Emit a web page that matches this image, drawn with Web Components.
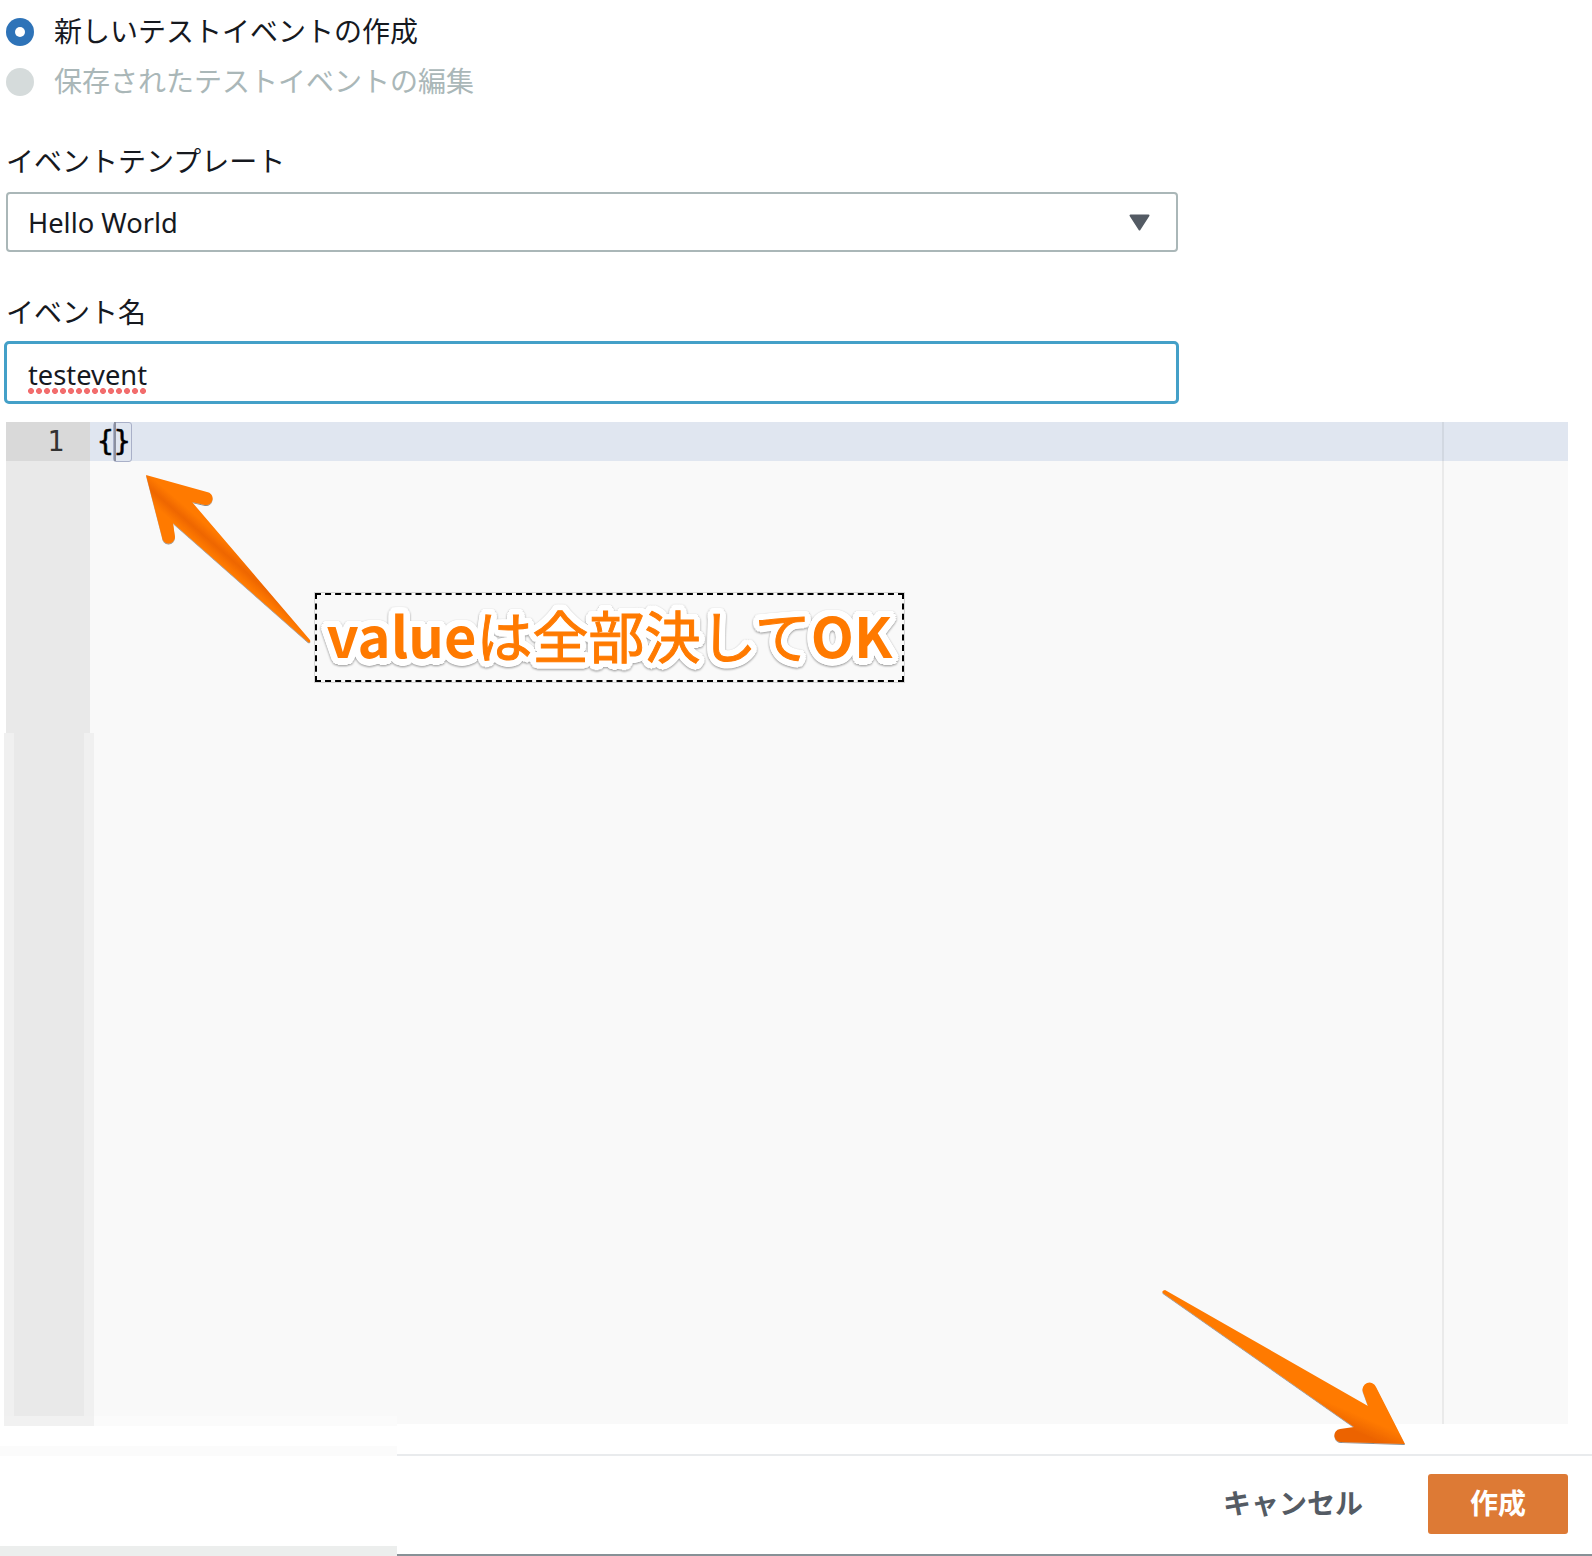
<!DOCTYPE html>
<html lang="ja">
<head>
<meta charset="utf-8">
<title>テストイベント</title>
<style>
  html, body { margin: 0; background: #fff; }
  body {
    width: 1592px;
    height: 1556px;
    overflow: hidden;
    font-family: "Noto Sans", "Noto Sans CJK JP", sans-serif;
    color: #16191f;
  }
</style>
</head>
<body>
<test-event-form>
  <form-radio checked>新しいテストイベントの作成</form-radio>
  <form-radio disabled>保存されたテストイベントの編集</form-radio>
  <form-field label="イベントテンプレート" style="--label-shift: -1px"><form-select>Hello World</form-select></form-field>
  <form-field label="イベント名" style="--label-shift: 2px; --label-gap: 11px"><form-input value="testevent"></form-input></form-field>
  <code-editor></code-editor>
  <form-footer></form-footer>
  <shot-annotations></shot-annotations>
</test-event-form>

<script>
const FONT = '"Noto Sans", "Noto Sans CJK JP", sans-serif';

class TestEventForm extends HTMLElement {
  constructor() {
    super();
    this.attachShadow({mode: 'open'}).innerHTML = `
      <style>
        :host { display: flex; flex-direction: column; position: relative; width: 1592px; height: 1556px; padding-top: 18px; box-sizing: border-box; }
        .radios { display: flex; flex-direction: column; gap: 22px; margin: 0 0 46px 6px; }
      </style>
      <div class="radios"><slot name="radios"></slot></div>
      <slot></slot>
    `;
  }
  connectedCallback() {
    this.querySelectorAll('form-radio').forEach(r => r.slot = 'radios');
  }
}

class FormRadio extends HTMLElement {
  constructor() {
    super();
    this.attachShadow({mode: 'open'}).innerHTML = `
      <style>
        :host { display: flex; align-items: center; gap: 20px; height: 28px; font: 28px/26px ${FONT}; color: #16191f; }
        :host([disabled]) { color: #aab7b8; }
        .dot { width: 28px; height: 28px; border-radius: 50%; background: #d5dbdb; display: flex; align-items: center; justify-content: center; flex: none; }
        :host([checked]) .dot { background: #2e73b8; }
        :host([checked]) .dot::after { content: ""; width: 10px; height: 10px; border-radius: 50%; background: #fff; }
        .text { padding-bottom: 2px; }
      </style>
      <span class="dot"></span><span class="text"><slot></slot></span>
    `;
  }
}

class FormField extends HTMLElement {
  constructor() {
    super();
    this.attachShadow({mode: 'open'}).innerHTML = `
      <style>
        :host { display: block; margin: 0 0 38px 6px; }
        :host(:last-of-type) { margin-bottom: 0; }
        label { display: block; height: 40px; margin-bottom: var(--label-gap, 10px); font: 28px/40px ${FONT}; color: #16191f; transform: translateY(var(--label-shift, 0)); }
      </style>
      <label></label>
      <slot></slot>
    `;
  }
  connectedCallback() {
    this.shadowRoot.querySelector('label').textContent = this.getAttribute('label');
  }
}

class FormSelect extends HTMLElement {
  constructor() {
    super();
    this.attachShadow({mode: 'open'}).innerHTML = `
      <style>
        :host { display: flex; align-items: center; justify-content: space-between; width: 1172px; height: 60px; box-sizing: border-box;
          border: 2px solid #aab7b8; border-radius: 4px; padding: 1px 26px 0 20px; font: 27.3px/1 ${FONT}; color: #16191f; }
        svg { display: block; }
      </style>
      <span><slot></slot></span>
      <svg width="21" height="17" viewBox="0 0 21 17"><path d="M1.5 1.5H19.5L10.5 15.5Z" fill="#545b64" stroke="#545b64" stroke-width="2" stroke-linejoin="round"/></svg>
    `;
  }
}

class FormInput extends HTMLElement {
  constructor() {
    super();
    this.attachShadow({mode: 'open'}).innerHTML = `
      <style>
        :host { display: flex; align-items: center; width: 1175px; height: 63px; margin-left: -2px; box-sizing: border-box;
          border: 3px solid #44a0c8; border-radius: 5px; padding: 5px 0 0 21px; font: 27.3px/1 ${FONT}; color: #16191f; }
        .word { position: relative; display: inline-block; }
        .word::after { content: ""; position: absolute; left: 0; right: 0; bottom: -5px; height: 6px;
          background: radial-gradient(circle at 3px 3px, #f26d6d 2.7px, transparent 3.2px) 0 0 / 8px 6px repeat-x; }
      </style>
      <span class="word"></span>
    `;
  }
  connectedCallback() {
    this.shadowRoot.querySelector('.word').textContent = this.getAttribute('value');
  }
}

class CodeEditor extends HTMLElement {
  constructor() {
    super();
    this.attachShadow({mode: 'open'}).innerHTML = `
      <style>
        :host { display: grid; grid-template-columns: 84px 1fr; position: relative; width: 1562px; height: 1002px; margin: 18px 0 0 6px;
          background: #f9f9f9; font: 28px/39px "DejaVu Sans Mono", "Liberation Mono", monospace; color: #000; }
        .gutter { background: #e9e9e9; color: #333; }
        .gutter div { height: 39px; padding-right: 26px; text-align: right; background: #d9d9d9; }
        .code div { height: 39px; padding-left: 7px; background: #e0e6f0; -webkit-text-stroke: .5px #000; }
        .bracket { position: absolute; left: 107px; top: 0; width: 17px; height: 38px; border: 1px solid #a9b0c8; border-radius: 3px; }
        .cursor { position: absolute; left: 108px; top: 0; width: 2px; height: 39px; background: #8b90a0; }
        .margin { position: absolute; left: 1436px; top: 0; bottom: 0; width: 2px; background: rgba(0, 0, 0, .06); }
      </style>
      <div class="gutter"><div>1</div></div>
      <div class="code"><div>{}</div></div>
      <span class="bracket"></span><span class="cursor"></span><span class="margin"></span>
    `;
  }
}

class FormFooter extends HTMLElement {
  constructor() {
    super();
    this.attachShadow({mode: 'open'}).innerHTML = `
      <style>
        :host { display: flex; justify-content: flex-end; align-items: flex-start; gap: 65px; margin-top: 30px; height: 102px; box-sizing: border-box;
          border-top: 2px solid #e9ebed; border-bottom: 2px solid #879196; padding: 18px 24px 0 0; font: 700 28px/58px ${FONT}; }
        .cancel { color: #545b64; }
        .create { width: 140px; height: 60px; border-radius: 3px; background: #dd7a35; color: #fff; text-align: center; }
      </style>
      <span class="cancel">キャンセル</span>
      <span class="create">作成</span>
    `;
  }
}

// white halo for the note text, built as a ring of shadows so the fill can keep its own stroke
const halo = (() => {
  const parts = [];
  for (let i = 0; i < 24; i++) {
    const a = i / 24 * Math.PI * 2;
    parts.push(`${(Math.cos(a) * 6.5).toFixed(1)}px ${(Math.sin(a) * 6.5).toFixed(1)}px 0 #fff`);
  }
  return parts.join(',');
})();

// everything pasted on top of the screenshot: arrows, note and the masked strips
class ShotAnnotations extends HTMLElement {
  constructor() {
    super();
    this.attachShadow({mode: 'open'}).innerHTML = `
      <style>
        :host { position: absolute; inset: 0; display: block; pointer-events: none; }
        .patch { position: absolute; }
        svg { position: absolute; left: 0; top: 0; }
        .note { position: absolute; left: 315px; top: 593px; width: 589px; height: 89px; box-sizing: border-box;
          border: 2px dashed #000; outline: 1px solid rgba(190, 190, 190, .6);
          display: flex; align-items: center; justify-content: center; white-space: nowrap; padding-bottom: 7px;
          font: 400 56px/1 "Noto Sans CJK JP", sans-serif; color: #ff7a00; }
        .text { filter: drop-shadow(0 1px 1px rgba(0, 0, 0, .4)); text-shadow: ${halo}; }
        .text .l { font-weight: 700; }
        .text .k { -webkit-text-stroke: 1px #ff7a00; }
      </style>
      <div class="patch" style="left:4px;top:733px;width:90px;height:693px;background:#f0f0f0"></div>
      <div class="patch" style="left:14px;top:733px;width:70px;height:683px;background:#e9e9e9"></div>
      <div class="patch" style="left:94px;top:1416px;width:303px;height:10px;background:#fbfbfb"></div>
      <div class="patch" style="left:0;top:1426px;width:397px;height:130px;background:#fff"></div>
      <div class="patch" style="left:4px;top:1416px;width:90px;height:10px;background:#f1f1f1"></div>
      <div class="patch" style="left:0;top:1446px;width:397px;height:10px;background:#fbfbfb"></div>
      <div class="patch" style="left:0;top:1546px;width:397px;height:10px;background:#eceeed"></div>
      <svg width="1592" height="1556" viewBox="0 0 1592 1556">
        <defs>
          <linearGradient id="a1" gradientUnits="userSpaceOnUse" x1="165" y1="515" x2="178" y2="500">
            <stop offset="0" stop-color="#ff7a00"/><stop offset=".5" stop-color="#ee6600"/><stop offset="1" stop-color="#ff7a00"/>
          </linearGradient>
          <linearGradient id="a2" gradientUnits="userSpaceOnUse" x1="1372" y1="1400" x2="1358" y2="1432">
            <stop offset="0" stop-color="#ff7a00"/><stop offset=".55" stop-color="#ff7a00"/><stop offset="1" stop-color="#ec6400"/>
          </linearGradient>
          <filter id="sh" x="-5%" y="-5%" width="110%" height="110%"><feDropShadow dx="0" dy="1" stdDeviation=".5" flood-color="#000" flood-opacity=".45"/></filter>
        </defs>
        <path filter="url(#sh)" fill="url(#a1)" d="M146 475 L207 492 A6.5 6.5 0 0 1 205 505 L192 502 L310 640 Q311 643 308 642 L173 523 L175 537 A6.5 6.5 0 0 1 162 537 Z"/>
        <path filter="url(#sh)" fill="url(#a2)" d="M1163 1293 Q1161 1291 1165 1290 L1368 1406 L1363 1392 A6.5 6.5 0 0 1 1376 1387 L1405 1444 L1342 1442 A6.5 6.5 0 0 1 1340 1429 L1354 1427 Z"/>
      </svg>
      <div class="note"><span class="text"><span class="l">value</span><span class="k">は全部決して</span><span class="l">OK</span></span></div>
    `;
  }
}

customElements.define('test-event-form', TestEventForm);
customElements.define('form-radio', FormRadio);
customElements.define('form-field', FormField);
customElements.define('form-select', FormSelect);
customElements.define('form-input', FormInput);
customElements.define('code-editor', CodeEditor);
customElements.define('form-footer', FormFooter);
customElements.define('shot-annotations', ShotAnnotations);
</script>
</body>
</html>
